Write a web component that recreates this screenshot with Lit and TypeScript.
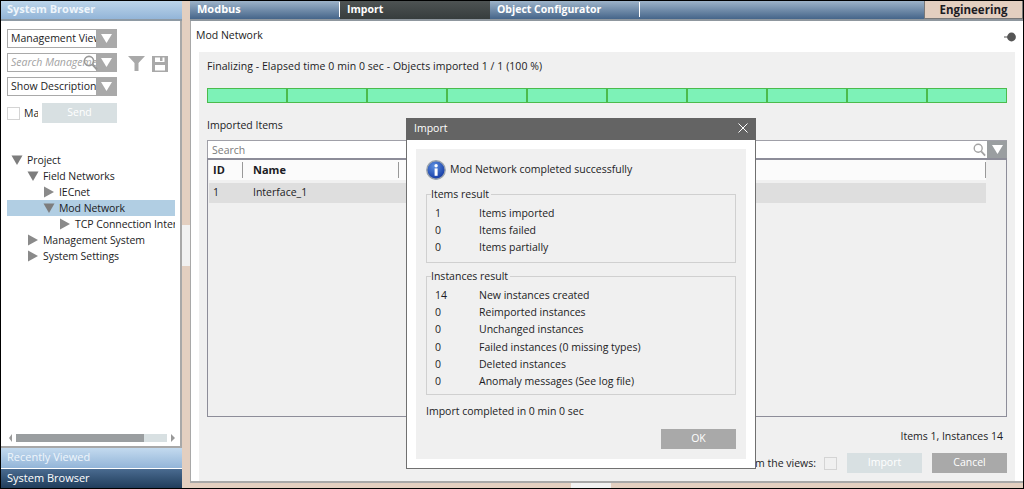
import { LitElement, html, css } from "lit";
import { customElement } from "lit/decorators.js";

const down = (c = "#fff") => html`<svg class="tri" width="11" height="9" viewBox="0 0 11 9"><path d="M0 0H11L5.5 9Z" fill=${c}></path></svg>`;
const right = () => html`<svg class="tri" width="12" height="12" viewBox="0 0 12 12"><path d="M1 .5V11.5L11 6Z" fill="#8a8a8a"></path></svg>`;
const open = () => html`<svg class="tri" width="12" height="12" viewBox="0 0 12 12"><path d="M.5 1.5H11.5L6 11Z" fill="#7d7d7d"></path></svg>`;
const lens = (c = "#a3a3a3", w = 15, h = 16) => html`<svg width=${w} height=${h} viewBox="0 0 15 16"><circle cx="6" cy="6" r="4.6" fill="none" stroke=${c} stroke-width="1.6"></circle><path d="M9.5 9.5L14 14.5" stroke=${c} stroke-width="2"></path></svg>`;

const tree: [string, number, "o" | "c", boolean?][] = [
  ["Project", 0, "o"],
  ["Field Networks", 1, "o"],
  ["IECnet", 2, "c"],
  ["Mod Network", 2, "o", true],
  ["TCP Connection Inter", 3, "c"],
  ["Management System", 1, "c"],
  ["System Settings", 1, "c"],
];
const items = [["1", "Items imported"], ["0", "Items failed"], ["0", "Items partially"]];
const insts = [["14", "New instances created"], ["0", "Reimported instances"], ["0", "Unchanged instances"], ["0", "Failed instances (0 missing types)"], ["0", "Deleted instances"], ["0", "Anomaly messages (See log file)"]];

@customElement("app-root")
export class AppRoot extends LitElement {
  static styles = css`
    :host { display: block; width: 1024px; height: 489px; overflow: hidden; position: relative; font-family: "Open Sans", "Noto Sans", sans-serif; font-size: 10.5px; color: #1c1c24; }
    * { box-sizing: border-box; }
    .app { width: 1024px; height: 489px; background: #e3cfc0; border: 1px solid #000; display: grid; grid-template-columns: 181px 8px 833px; grid-template-rows: 487px; }
    .left { display: flex; flex-direction: column; min-height: 0; }
    .hdr { height: 20px; flex: none; color: #fff; font-weight: 700; padding: 0 6px; line-height: 16px; font-size: 11px; }
    .lhdr { background: linear-gradient(#bcd5ea, #93b5d8); border-bottom: 2px solid #8e9aa4; color: #eef5fb; }
    .lbody { flex: none; height: 427px; background: #fff; border-right: 2px solid #a8a8a8; border-bottom: 2px solid #a8a8a8; display: flex; flex-direction: column; padding: 8px 4px 0 6px; }
    .combo { width: 110px; height: 19px; border: 1px solid #a9a9a9; display: flex; margin-bottom: 5px; background: #fff; position: relative; white-space: nowrap; }
    .combo .t { flex: 1; min-width: 0; overflow: hidden; padding-left: 3px; line-height: 16px; }
    .combo .a { width: 20px; flex: none; background: #a9a9a9; display: flex; align-items: center; justify-content: center; }
    .ph { font-style: italic; color: #a2a2a2; }
    .lensl { position: absolute; left: 75px; top: 1px; }
    .tools { position: absolute; left: 128px; top: 55px; display: flex; align-items: center; gap: 7px; }
    .sendrow { display: flex; align-items: center; margin-top: 2px; height: 20px; }
    .cb { width: 13px; height: 13px; border: 1px solid #d4d4d4; background: #fff; flex: none; }
    .ma { width: 22px; overflow: hidden; padding-left: 4px; flex: none; width: 22px; white-space: nowrap; }
    .ma span { display: block; width: 14px; overflow: hidden; }
    .send { width: 75px; height: 20px; background: #d8e0e2; color: #fff; text-align: center; line-height: 19px; }
    .tree { margin-top: 29px; flex: 1; letter-spacing: -.07px; }
    .row { height: 16px; line-height: 15px; display: flex; align-items: center; gap: 4px; white-space: nowrap; width: 168px; overflow: hidden; }
    .row.sel { background: #b1cee3; }
    .tri { flex: none; }
    .hs { display: flex; align-items: center; height: 10px; margin-bottom: 3px; gap: 4px; padding-left: 2px; }
    .hs i { width: 0; height: 0; border-style: solid; border-width: 4px 0; border-color: transparent; }
    .hs .l { border-right: 3px solid #999; }
    .hs .r { border-left: 4px solid #999; }
    .track { width: 151px; height: 8px; background: #d8e0e2; }
    .thumb { width: 128px; height: 8px; background: #9a9ea0; }
    .rv { height: 21px; flex: none; background: linear-gradient(#c3daef, #93b5d8); color: #eef5fb; font-weight: 400; border-bottom: 1px solid #fff; line-height: 17px; }
    .sb { height: 19px; flex: none; background: linear-gradient(#4a6b90, #203d5b); font-weight: 400; line-height: 18px; }
    .split { padding-top: 224px; }
    .split div { width: 8px; height: 41px; background: #f1f1f1; }
    .main { display: flex; flex-direction: column; min-height: 0; }
    .tabs { height: 20px; flex: none; display: flex; background: linear-gradient(#9db3c9, #45658a); border-bottom: 2px solid #8f979e; font-weight: 700; color: #fff; font-size: 11px; }
    .tab { line-height: 14px; padding-left: 7px; border-right: 1px solid #fff; height: 15px; margin-top: 1px; }
    .t1 { width: 150px; }
    .t2 { width: 150px; background: linear-gradient(#4e5353, #373d3d); height: 18px; margin-top: 0; border: 0; padding-top: 1px; font-size: 10.5px; }
    .t3 { width: 150px; font-size: 10.5px; }
    .eng { margin-left: auto; width: 99px; height: 18px; margin-top: 0; background: #e3cfc0; color: #1c1c24; border: 1px solid #787878; border-width: 0 1px 1px 1px; text-align: center; line-height: 17px; font-size: 11.5px; }
    .mbody { flex: 1; background: #fff; border-left: 1px solid #a8a8a8; border-bottom: 2px solid #a8a8a8; display: flex; flex-direction: column; min-height: 0; }
    .pageh { height: 31px; flex: none; padding: 6px 0 0 5px; line-height: 16px; display: flex; justify-content: space-between; }
    .pin { margin: 5px 7px 0 0; }
    .panel { flex: 1; margin: 0 8px 0 8px; background: #f0f0f0; padding: 6px 8px 0; display: flex; flex-direction: column; min-height: 0; }
    .status { height: 30px; line-height: 16px; flex: none; letter-spacing: .06px; }
    .prog { display: flex; height: 15px; flex: none; border: 1px solid #4cbb4c; background: #7df2b7; }
    .prog div { width: 80px; border-right: 2px solid #4cbb4c; flex: none; }
    .prog div:last-child { border: 0; flex: 1; width: auto; }
    .imp { height: 37px; flex: none; padding-top: 14px; line-height: 16px; }
    .search { height: 18px; flex: none; background: #fff; border-top: 1px solid #a0a0a8; display: flex; padding-left: 4px; line-height: 18px; color: #7b7b7b; border-left: 1px solid #a0a0a8; }
    .search span { flex: 1; }
    .search .lz { width: 13px; margin-right: 1px; padding-top: 2px; }
    .search .a { width: 20px; background: #9a9ea0; display: flex; align-items: center; justify-content: center; }
    .table { height: 259px; flex: none; border: 1px solid #8d8d99; padding: 0 20px 0 1px; border-top: 2px solid #8d8d99; }
    .th { height: 20px; background: #fbfbfb; display: flex; font-weight: 700; align-items: center; margin-bottom: 3px; font-size: 11px; line-height: 16px; }
    .th span { border-right: 1px solid #999; height: 16px; padding-left: 4px; }
    .c1 { width: 34px; flex: none; }
    .c2 { width: 156px; flex: none; padding-left: 10px !important; }
    .th .c3 { margin-left: auto; width: 1px; padding: 0; }
    .tr { height: 20px; background: #dedede; display: flex; align-items: center; padding-bottom: 2px; }
    .tr span:first-child { width: 34px; padding-left: 4px; }
    .tr span:last-child { padding-left: 10px; }
    .count { height: 36px; flex: none; text-align: right; padding: 11px 4px 0 0; line-height: 16px; }
    .foot { display: flex; height: 20px; flex: none; align-items: center; justify-content: flex-end; }
    .foot .q { margin-right: 8px; white-space: nowrap; }
    .foot .cb { background: #f0f0f0; margin-right: 10px; }
    .btn { width: 75px; height: 20px; text-align: center; line-height: 19px; color: #fff; background: #a9a9a9; flex: none; }
    .btn.dis { background: #d8e0e2; margin-right: 10px; }
    .mfoot { height: 5px; flex: none; display: flex; justify-content: center; padding-right: 30px; }
    .mfoot div { width: 40px; background: #f1f1f1; margin-left: -1px; }
    .dialog { position: absolute; left: 406px; top: 118px; width: 350px; height: 351px; background: #fff; border: 1px solid #707070; border-top: 0; }
    .mt { height: 22px; background: #646464; margin: 0 -1px; color: #fff; display: flex; justify-content: space-between; align-items: center; padding: 0 8px 2px; }
    .mc { margin: 9px 9px 0 9px; height: 310px; background: #f0f0f0; padding: 10px 10px 0; display: flex; flex-direction: column; }
    .msg { display: flex; align-items: center; gap: 4px; height: 21px; margin-bottom: 7px; line-height: 16px; flex: none; }
    .msg span { padding-bottom: 1px; }
    fieldset { margin: 0; padding: 0 0 0 8px; border: 1px solid #d0d0d0; min-width: 0; flex: none; }
    legend { padding: 0 2px 0 0; margin-left: -4px; line-height: 15px; }
    .fs1 { height: 76px; margin-bottom: 6px; padding-top: 3px; }
    .fs2 { height: 126px; padding-top: 3px; }
    .ir { display: grid; grid-template-columns: 44px 1fr; height: 17.2px; line-height: 16px; }
    .done { height: 16px; margin-top: 8px; line-height: 16px; flex: none; }
    .ok { align-self: flex-end; margin-top: 10px; }
  `;

  render() {
    return html`
      <div class="app">
        <div class="left">
          <div class="hdr lhdr">System Browser</div>
          <div class="lbody">
            <div class="combo"><div class="t">Management View</div><div class="a">${down()}</div></div>
            <div class="combo"><div class="t ph">Search Management</div><span class="lensl">${lens("#999")}</span><div class="a">${down()}</div></div>
            <div class="combo"><div class="t">Show Description</div><div class="a">${down()}</div></div>
            <div class="tools">
              <svg width="17" height="17" viewBox="0 0 17 17"><path d="M0 1H17L10.5 8V16H6.5V8Z" fill="#a9a9a9"></path></svg>
              <svg width="16" height="16" viewBox="0 0 16 16"><path fill-rule="evenodd" d="M0 0H16V16H0ZM3 1.5V6H12.5V1.5H10.5V5H8V1.5ZM3 9V14.5H13V9Z" fill="#a9a9a9"></path></svg>
            </div>
            <div class="sendrow"><span class="cb"></span><span class="ma"><span>Ma</span></span><div class="send">Send</div></div>
            <div class="tree">
              ${tree.map(([n, d, k, s]) => html`<div class="row ${s ? "sel" : ""}" style="padding-left:${d * 16 + 4}px">${k === "o" ? open() : right()}<span>${n}</span></div>`)}
            </div>
            <div class="hs"><i class="l"></i><div class="track"><div class="thumb"></div></div><i class="r"></i></div>
          </div>
          <div class="hdr rv">Recently Viewed</div>
          <div class="hdr sb">System Browser</div>
        </div>
        <div class="split"><div></div></div>
        <div class="main">
          <div class="tabs">
            <div class="tab t1">Modbus</div>
            <div class="tab t2">Import</div>
            <div class="tab t3">Object Configurator</div>
            <div class="eng">Engineering</div>
          </div>
          <div class="mbody">
            <div class="pageh"><span>Mod Network</span>
              <svg class="pin" width="12" height="10" viewBox="0 0 12 10"><path d="M0 5H4" stroke="#555" stroke-width="1"></path><circle cx="7.5" cy="5" r="4.4" fill="#555"></circle></svg>
            </div>
            <div class="panel">
              <div class="status">Finalizing - Elapsed time 0 min 0 sec - Objects imported 1 / 1 (100 %)</div>
              <div class="prog">${Array.from({ length: 10 }, () => html`<div></div>`)}</div>
              <div class="imp">Imported Items</div>
              <div class="search"><span>Search</span><div class="lz">${lens("#a3a3a3", 13, 14)}</div><div class="a">${down()}</div></div>
              <div class="table">
                <div class="th"><span class="c1">ID</span><span class="c2">Name</span><span class="c3"></span></div>
                <div class="tr"><span>1</span><span>Interface_1</span></div>
              </div>
              <div class="count">Items 1, Instances 14</div>
              <div class="foot"><span class="q">Remove from the views:</span><span class="cb"></span><div class="btn dis">Import</div><div class="btn">Cancel</div></div>
            </div>
          </div>
          <div class="mfoot"><div></div></div>
        </div>
      </div>
      <div class="dialog">
        <div class="mt"><span>Import</span>
          <svg width="10" height="10" viewBox="0 0 10 10"><path d="M.5.5L9.5 9.5M9.5.5L.5 9.5" stroke="#fff" stroke-width="1"></path></svg>
        </div>
        <div class="mc">
          <div class="msg">
            <svg width="20" height="20" viewBox="0 0 20 20"><defs><radialGradient id="g" cx=".4" cy=".3" r=".8"><stop offset="0" stop-color="#5b8fe0"></stop><stop offset="1" stop-color="#0c2f9c"></stop></radialGradient></defs><circle cx="10" cy="10" r="9.2" fill="url(#g)" stroke="#9aa3ad" stroke-width="1.4"></circle><rect x="8.6" y="8.4" width="3" height="7.4" fill="#fff"></rect><circle cx="10.1" cy="5.8" r="1.7" fill="#fff"></circle></svg>
            <span>Mod Network completed successfully</span>
          </div>
          <fieldset class="fs1"><legend>Items result</legend>${items.map(([a, b]) => html`<div class="ir"><span>${a}</span><span>${b}</span></div>`)}</fieldset>
          <fieldset class="fs2"><legend>Instances result</legend>${insts.map(([a, b]) => html`<div class="ir"><span>${a}</span><span>${b}</span></div>`)}</fieldset>
          <div class="done">Import completed in 0 min 0 sec</div>
          <div class="btn ok">OK</div>
        </div>
      </div>
    `;
  }
}
